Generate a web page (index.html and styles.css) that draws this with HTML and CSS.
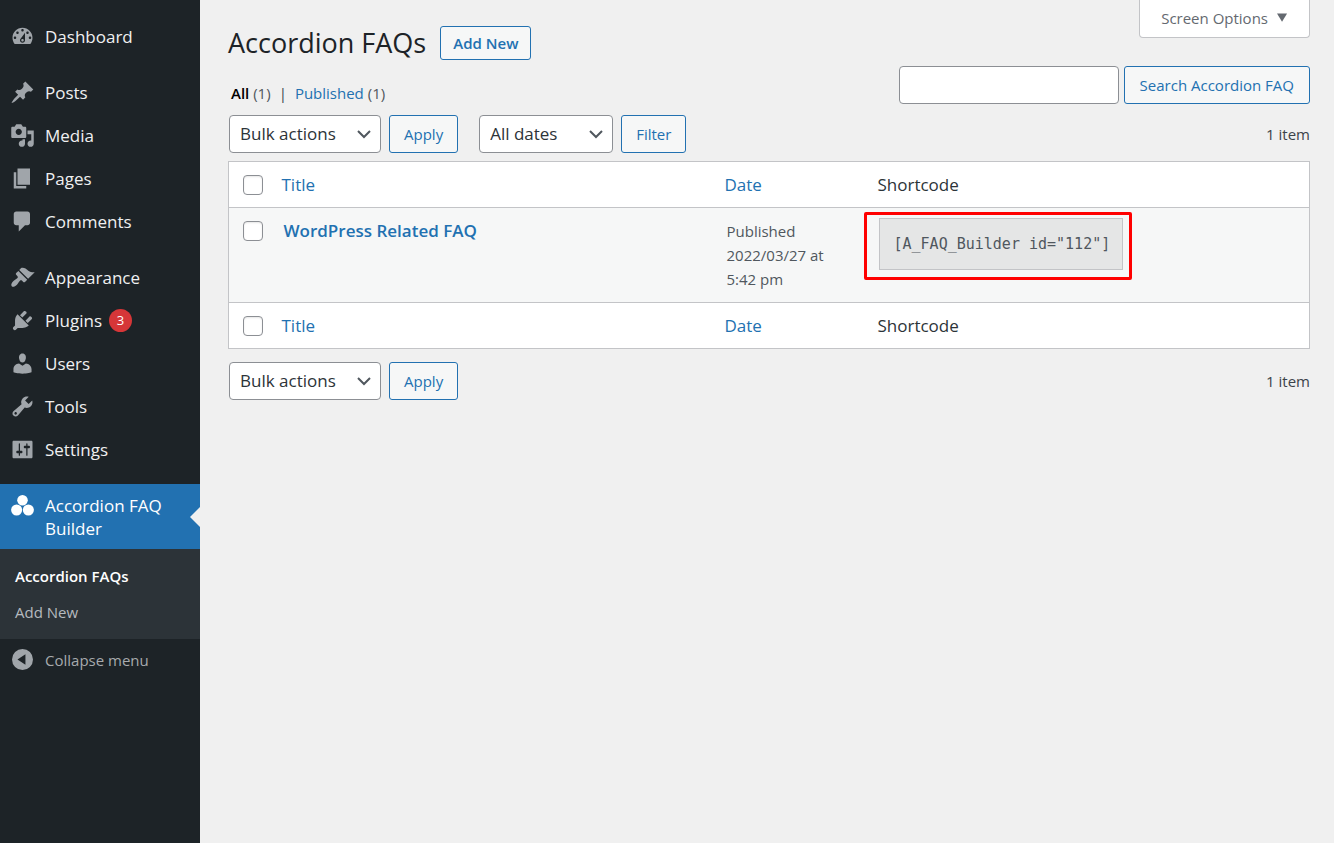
FILE: index.html
```html
<!DOCTYPE html>
<html lang="en">
<head>
<meta charset="utf-8">
<title>Accordion FAQs</title>
<link rel="stylesheet" href="styles.css">
</head>
<body>
<div class="layout">
<nav class="sidebar" aria-label="Main menu">
  <ul class="menu">
    <li><a class="item" href="#"><svg class="icon" viewBox="0 0 20 20"><path d="M3.76 16h12.48c1.1-1.37 1.76-3.11 1.76-5 0-4.42-3.58-8-8-8s-8 3.58-8 8c0 1.89.66 3.63 1.76 5zM10 4c.55 0 1 .45 1 1s-.45 1-1 1-1-.45-1-1 .45-1 1-1zM6 6c.55 0 1 .45 1 1s-.45 1-1 1-1-.45-1-1 .45-1 1-1zm8 0c.55 0 1 .45 1 1s-.45 1-1 1-1-.45-1-1 .45-1 1-1zm-5.37 5.55L12 7v6c0 1.1-.9 2-2 2s-2-.9-2-2c0-.57.24-1.08.63-1.45zM4 10c.55 0 1 .45 1 1s-.45 1-1 1-1-.45-1-1 .45-1 1-1zm12 0c.55 0 1 .45 1 1s-.45 1-1 1-1-.45-1-1 .45-1 1-1zm-5 3c0-.55-.45-1-1-1s-1 .45-1 1 .45 1 1 1 1-.45 1-1z"/></svg><span>Dashboard</span></a></li>
  </ul>
  <ul class="menu">
    <li><a class="item" href="#"><svg class="icon" viewBox="0 0 20 20"><path d="M10.44 3.02l1.82-1.82 6.36 6.35-1.83 1.82c-1.05-.68-2.48-.57-3.41.36l-.75.75c-.92.93-1.04 2.35-.35 3.41l-1.83 1.82-2.41-2.41-2.8 2.79c-.42.42-3.38 2.71-3.8 2.29s1.86-3.39 2.28-3.81l2.79-2.79L4.1 9.36l1.83-1.82c1.05.69 2.48.57 3.4-.36l.75-.75c.93-.92 1.05-2.35.36-3.41z"/></svg><span>Posts</span></a></li>
    <li><a class="item" href="#"><svg class="icon" viewBox="0 0 20 20"><path d="M13 11V4c0-.55-.45-1-1-1h-1.67L9 1H5L3.67 3H2c-.55 0-1 .45-1 1v7c0 .55.45 1 1 1h10c.55 0 1-.45 1-1zM7 4.5c1.38 0 2.5 1.12 2.5 2.5S8.38 9.5 7 9.5 4.5 8.38 4.5 7 5.62 4.5 7 4.5zM14 6h5v10.5c0 1.38-1.12 2.5-2.5 2.5S14 17.88 14 16.5s1.12-2.5 2.5-2.5c.17 0 .34.02.5.05V9h-3V6zm-4 8.05V13h2v3.5c0 1.38-1.12 2.5-2.5 2.5S7 17.88 7 16.5 8.12 14 9.5 14c.17 0 .34.02.5.05z"/></svg><span>Media</span></a></li>
    <li><a class="item" href="#"><svg class="icon" viewBox="0 0 20 20"><path d="M6 15V2h10v13H6zm-1 1h8v2H3V5h2v11z"/></svg><span>Pages</span></a></li>
    <li><a class="item" href="#"><svg class="icon" viewBox="0 0 20 20"><path d="M5 2h9c1.1 0 2 .9 2 2v7c0 1.1-.9 2-2 2h-2l-5 5v-5H5c-1.1 0-2-.9-2-2V4c0-1.1.9-2 2-2z"/></svg><span>Comments</span></a></li>
  </ul>
  <ul class="menu">
    <li><a class="item" href="#"><svg class="icon" viewBox="0 0 20 20"><path d="M14.48 11.06L7.41 3.99l1.5-1.5c.5-.56 2.3-.47 3.51.32 1.21.8 1.43 1.28 2.91 2.1 1.18.64 2.45 1.26 4.45.85zm-.71.71L6.7 4.7 4.93 6.47c-.39.39-.39 1.02 0 1.41l1.06 1.06c.39.39.39 1.03 0 1.42-.6.6-1.43 1.11-2.21 1.69-.35.26-.7.53-1.01.84C1.43 14.23.4 16.08 1.4 17.07c.99 1 2.84-.03 4.18-1.36.31-.31.58-.66.85-1.02.57-.78 1.08-1.61 1.69-2.21.39-.39 1.02-.39 1.41 0l1.06 1.06c.39.39 1.02.39 1.41 0z"/></svg><span>Appearance</span></a></li>
    <li><a class="item" href="#"><svg class="icon" viewBox="0 0 20 20"><path d="M13.11 4.36L9.87 7.6 8 5.73l3.24-3.24c.35-.34 1.05-.2 1.56.32.52.51.66 1.21.31 1.55zm-8 1.77l.91-1.12 9.01 9.01-1.19.84c-.71.71-2.63 1.16-3.82 1.16H6.14L4.9 17.26c-.59.59-1.54.59-2.12 0-.59-.58-.59-1.53 0-2.12l1.24-1.24v-3.88c0-1.13.4-3.19 1.09-3.89zm7.26 3.97l3.24-3.24c.34-.35 1.04-.21 1.55.31.52.51.66 1.21.31 1.55l-3.24 3.25z"/></svg><span>Plugins</span><span class="badge">3</span></a></li>
    <li><a class="item" href="#"><svg class="icon" viewBox="0 0 20 20"><path d="M10 9.25c-2.27 0-2.73-3.44-2.73-3.44C7 4.02 7.82 2 9.97 2c2.16 0 2.98 2.02 2.71 3.81 0 0-.41 3.44-2.68 3.44zm0 2.57L12.72 10c2.39 0 4.52 2.33 4.52 4.53v2.49s-3.65 1.13-7.24 1.13c-3.65 0-7.24-1.13-7.24-1.13v-2.49c0-2.25 1.94-4.48 4.47-4.48z"/></svg><span>Users</span></a></li>
    <li><a class="item" href="#"><svg class="icon" viewBox="0 0 20 20"><path d="M16.68 9.77c-1.34 1.34-3.3 1.67-4.95.99l-5.41 6.52c-.99.99-2.59.99-3.58 0s-.99-2.59 0-3.57l6.52-5.42c-.68-1.65-.35-3.61.99-4.95 1.28-1.28 3.12-1.62 4.72-1.06l-2.89 2.89 2.82 2.82 2.86-2.87c.53 1.58.18 3.39-1.08 4.65zM3.81 16.21c.4.39 1.04.39 1.43 0 .4-.4.4-1.04 0-1.43-.39-.4-1.03-.4-1.43 0-.39.39-.39 1.03 0 1.43z"/></svg><span>Tools</span></a></li>
    <li><a class="item" href="#"><svg class="icon" viewBox="0 0 20 20"><path d="M18 16V4c0-.55-.45-1-1-1H3c-.55 0-1 .45-1 1v12c0 .55.45 1 1 1h14c.55 0 1-.45 1-1zM8 11h1c.55 0 1 .45 1 1s-.45 1-1 1H8v1.500c0 .28-.22.5-.5.5s-.5-.22-.5-.5V13H6c-.55 0-1-.45-1-1s.45-1 1-1h1V5.500c0-.28.22-.5.5-.5s.5.22.5.5V11zm5-2h-1c-.55 0-1-.45-1-1s.45-1 1-1h1V5.500c0-.28.22-.5.5-.5s.5.22.5.5V7h1c.55 0 1 .45 1 1s-.45 1-1 1h-1v5.500c0 .28-.22.5-.5.5s-.5-.22-.5-.5V9z"/></svg><span>Settings</span></a></li>
  </ul>
  <a class="item current" href="#"><svg class="icon" viewBox="0 0 20 20"><circle cx="10" cy="5.400" r="4.600"/><circle cx="4.900" cy="13.900" r="4.800"/><circle cx="15.100" cy="13.900" r="4.800"/></svg><span>Accordion FAQ Builder</span></a>
  <ul class="submenu">
    <li><a class="selected" href="#">Accordion FAQs</a></li>
    <li><a href="#">Add New</a></li>
  </ul>
  <button class="item collapse" type="button"><svg class="icon" viewBox="0 0 20 20"><path fill-rule="evenodd" d="M10 0a10 10 0 1 0 0 20a10 10 0 0 0 0-20zM12.800 5v10L5.200 10z"/></svg><span>Collapse menu</span></button>
</nav>
<main class="content">
  <header class="top">
    <div class="heading">
      <div class="title-line"><h1>Accordion FAQs</h1><a class="add-new" href="#">Add New</a></div>
      <div class="views"><a class="all" href="#">All</a> <span class="count">(1)</span><span class="bar">|</span><a href="#">Published</a> <span class="count">(1)</span></div>
    </div>
    <div class="tools">
      <button class="screen-options" type="button">Screen Options <svg class="caret" viewBox="0 0 12 9"><path d="M0 0h11L5.500 9z"/></svg></button>
      <form class="search"><input type="search" aria-label="Search Accordion FAQ"><button class="button" type="button">Search Accordion FAQ</button></form>
    </div>
  </header>
  <div class="tablenav">
    <span class="picker bulk"><select aria-label="Bulk action"><option>Bulk actions</option></select><svg class="chevron" viewBox="0 0 14 9"><path d="M1 1l6 6 6-6"/></svg></span>
    <button class="button" type="button">Apply</button>
    <span class="picker dates"><select aria-label="Filter by date"><option>All dates</option></select><svg class="chevron" viewBox="0 0 14 9"><path d="M1 1l6 6 6-6"/></svg></span>
    <button class="button" type="button">Filter</button>
    <span class="total">1 item</span>
  </div>
  <table class="list">
    <colgroup><col class="col-check"><col><col class="col-date"><col class="col-code"></colgroup>
    <thead><tr><td><input type="checkbox" aria-label="Select all"></td><th scope="col"><a href="#">Title</a></th><th scope="col"><a href="#">Date</a></th><th scope="col">Shortcode</th></tr></thead>
    <tbody><tr>
      <td><input type="checkbox" aria-label="Select WordPress Related FAQ"></td>
      <td class="name"><a href="#">WordPress Related FAQ</a></td>
      <td class="date">Published<br>2022/03/27 at<br>5:42 pm</td>
      <td class="shortcode"><div class="highlight"><code>[A_FAQ_Builder id="112"]</code></div></td>
    </tr></tbody>
    <tfoot><tr><td><input type="checkbox" aria-label="Select all rows"></td><th scope="col"><a href="#">Title</a></th><th scope="col"><a href="#">Date</a></th><th scope="col">Shortcode</th></tr></tfoot>
  </table>
  <div class="tablenav bottom">
    <span class="picker bulk"><select aria-label="Bulk action"><option>Bulk actions</option></select><svg class="chevron" viewBox="0 0 14 9"><path d="M1 1l6 6 6-6"/></svg></span>
    <button class="button" type="button">Apply</button>
    <span class="total">1 item</span>
  </div>
</main>
</div>
</body>
</html>
```

FILE: styles.css
```css
* { box-sizing: border-box; }
body {
  margin: 0;
  background: #f0f0f0;
  color: #3c434a;
  font: 15px/24px "Open Sans", "Noto Sans", sans-serif;
}
a { color: #2271b1; text-decoration: none; }
ul { list-style: none; margin: 0; padding: 0; }
button, input, select { font: inherit; margin: 0; }
.layout { display: flex; min-height: 100vh; }

.sidebar { flex: 0 0 200px; background: #1d2327; padding-top: 15px; }
.menu { margin-bottom: 13px; }
.item {
  display: flex;
  align-items: flex-start;
  gap: 10px;
  width: 100%;
  padding: 10px 24px 10px 10px;
  border: 0;
  background: none;
  color: #f0f0f1;
  font-size: 17px;
  line-height: 23px;
  text-align: left;
}
.icon { flex: none; width: 25px; height: 23px; fill: #a0a5aa; overflow: visible; }
.menu .icon { height: 25px; margin: -1px 0; }
.badge {
  width: 23px;
  height: 23px;
  margin-left: -3px;
  border-radius: 50%;
  background: #d63638;
  color: #fff;
  font-size: 13px;
  text-align: center;
}
.current { position: relative; padding-bottom: 9px; background: #2271b1; color: #fff; }
.current .icon { fill: #fff; }
.current::after {
  content: "";
  position: absolute;
  right: 0;
  top: 50%;
  margin-top: -10px;
  border: 10px solid transparent;
  border-left: 0;
  border-right-color: #f0f0f0;
}
.submenu { background: #2c3338; padding: 9px 0; }
.submenu a { display: block; padding: 6px 15px; color: #b5babf; }
.submenu .selected { color: #fff; font-weight: 600; }
.collapse { color: #a7aaad; font-size: 15px; }
.collapse .icon { width: 21px; height: 21px; margin: 0 2px; }

.content { flex: 1; padding: 0 24px 0 28px; }
.top { display: flex; justify-content: space-between; }
.title-line { display: flex; align-items: center; gap: 14px; padding-top: 26px; }
h1 { margin: 0; color: #1d2327; font-size: 27px; font-weight: 400; line-height: 34px; }
.add-new {
  padding: 4px 12px;
  border: 1px solid #2271b1;
  border-radius: 3px;
  background: #f6f7f7;
  font-weight: 600;
}
.views { padding: 21px 3px 0; }
.views .all { color: #000; font-weight: 600; }
.count { color: #50575e; }
.bar { margin: 0 8px; }
.tools { display: flex; flex-direction: column; align-items: flex-end; gap: 28px; }
.screen-options {
  display: flex;
  align-items: center;
  gap: 9px;
  height: 38px;
  padding: 0 21px 2px;
  border: 1px solid #c3c4c7;
  border-top: 0;
  border-radius: 0 0 4px 4px;
  background: #fff;
  color: #646970;
}
.caret { width: 11px; height: 9px; fill: #646970; }
.search { display: flex; gap: 5px; }
.search input { width: 220px; height: 38px; border: 1px solid #8c8f94; border-radius: 4px; background: #fff; }
.button {
  height: 38px;
  padding: 0 14px;
  border: 1px solid #2271b1;
  border-radius: 3px;
  background: #f6f7f7;
  color: #2271b1;
}
.search .button { padding: 0 15px; }

.tablenav { display: flex; align-items: center; gap: 8px; margin: 10px 0 8px; padding-left: 1px; }
.tablenav.bottom { margin-top: 13px; }
.picker { position: relative; }
.picker select {
  appearance: none;
  display: block;
  width: 100%;
  height: 38px;
  padding: 0 30px 0 10px;
  border: 1px solid #8c8f94;
  border-radius: 4px;
  background: #fff;
  color: #2c3338;
  font-size: 17px;
}
.bulk { width: 152px; }
.dates { width: 134px; margin-left: 13px; }
.chevron {
  position: absolute;
  right: 10px;
  top: 15px;
  width: 14px;
  height: 9px;
  fill: none;
  stroke: #50575e;
  stroke-width: 2;
  pointer-events: none;
}
.total { margin-left: auto; }

.list {
  width: 100%;
  border: 1px solid #c3c4c7;
  border-collapse: collapse;
  table-layout: fixed;
  background: #fff;
}
.col-check { width: 43px; }
.col-date { width: 153px; }
.col-code { width: 442px; }
.list td, .list th { padding: 11px 10px 10px; text-align: left; vertical-align: top; }
.list th { font-size: 17px; font-weight: 400; color: #2c3338; }
.list td:first-child { padding: 13px 0 0 14px; line-height: 0; }
.list input {
  appearance: none;
  width: 20px;
  height: 20px;
  border: 1px solid #8c8f94;
  border-radius: 4px;
  background: #fff;
  box-shadow: inset 0 1px 2px rgba(0, 0, 0, .1);
}
.list tbody { border: solid #c3c4c7; border-width: 1px 0; background: #f6f7f7; }
.list .name { padding-left: 12px; font-size: 17px; font-weight: 600; }
.list .date { padding: 11px 12px; color: #50575e; }
.list .shortcode { padding: 4px 0; }
.highlight {
  width: fit-content;
  margin-left: -4px;
  padding: 3px 6px 7px 12px;
  border: 3px solid #f00;
  border-radius: 2px;
}
.highlight code {
  display: block;
  padding: 13px 12px 13px 14px;
  border: 1px solid #c3c4c7;
  background: #e5e6e6;
  color: #50575e;
  font: 15px/24px "DejaVu Sans Mono", "Liberation Mono", monospace;
}
```
